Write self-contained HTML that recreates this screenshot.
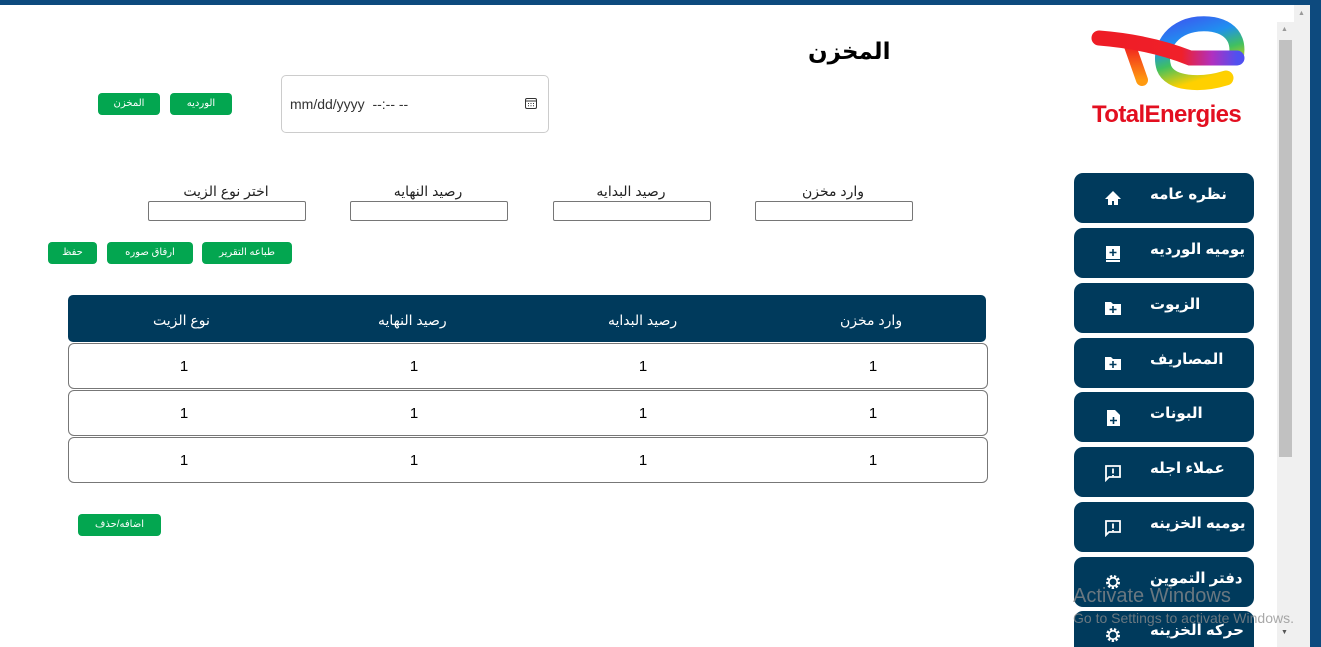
<!DOCTYPE html>
<html><head><meta charset="utf-8"><style>
html,body{margin:0;width:1321px;height:647px;overflow:hidden;background:#fff;font-family:"Liberation Sans","DejaVu Sans",sans-serif;position:relative}
.a{position:absolute}
.g{position:absolute;background:#03a650;color:#fff;border-radius:4px;font-size:10px;text-align:center;line-height:22px;height:22px}
.in{position:absolute;border:1px solid #767676;border-radius:2px;height:18px;width:156px;background:#fff}
.lb{position:absolute;font-size:14px;text-align:center;width:156px;color:#222}
.nav{position:absolute;left:1074px;width:180px;height:50px;background:#003a5c;border-radius:9px;color:#fff;font-weight:bold;font-size:15px;overflow:hidden}
.nav span{position:absolute;left:76px;top:12px}
.nav svg{position:absolute;left:30px;top:17px}
.th{position:absolute;left:68px;top:295px;width:918px;height:47px;background:#003a5c;border-radius:5px;color:#fff;font-size:14px}
.row{position:absolute;left:68px;width:920px;height:46px;border:1px solid #777;border-radius:6px;box-sizing:border-box;font-size:15px}
.c{position:absolute;width:40px;text-align:center}
</style></head><body>
<div class="a" style="left:0;top:0;width:1321px;height:5px;background:#0d4a7e"></div>
<div class="a" style="left:1310px;top:0;width:11px;height:647px;background:#0d4a7e"></div>
<div class="a" style="left:1294px;top:5px;width:16px;height:642px;background:#f0f0f0"></div>
<div class="a" style="left:1277px;top:22px;width:17px;height:625px;background:#f0f0f0"></div>
<div class="a" style="left:1279px;top:40px;width:13px;height:417px;background:#c1c1c1"></div>
<div class="a" style="left:1281px;top:26px;font-size:7px;color:#999">▲</div>
<div class="a" style="left:1298px;top:10px;font-size:7px;color:#999">▲</div>
<div class="a" style="left:1281px;top:629px;font-size:7px;color:#555">▼</div>

<svg class="a" style="left:1090px;top:16px" width="160" height="84" viewBox="0 0 160 84">
<defs><linearGradient id="r" x1="0" x2="1"><stop offset="0" stop-color="#ee1c25"/><stop offset=".6" stop-color="#f0202a"/><stop offset=".82" stop-color="#b030c0"/><stop offset="1" stop-color="#5050f0"/></linearGradient>
<linearGradient id="e" x1="0" y1="0" x2="0.4" y2="1"><stop offset="0" stop-color="#3a5cf0"/><stop offset=".35" stop-color="#2090f0"/><stop offset=".65" stop-color="#40c060"/><stop offset="1" stop-color="#ffd000"/></linearGradient>
<linearGradient id="t" x1="0" y1="0" x2="0" y2="1"><stop offset="0" stop-color="#f02020"/><stop offset="1" stop-color="#ff9a10"/></linearGradient></defs>
<path d="M146 42 C152 14 128 6 108 8 C80 11 68 34 74 52 C80 68 110 70 136 62" stroke="url(#e)" stroke-width="15" fill="none" stroke-linecap="round"/>
<path d="M40 30 L52 64" stroke="url(#t)" stroke-width="12" stroke-linecap="round"/>
<path d="M9 22 Q60 26 100 42 L147 42" stroke="url(#r)" stroke-width="15" fill="none" stroke-linecap="round"/>
</svg>
<div class="a" style="left:1092px;top:101px;color:#e30f20;font-weight:bold;font-size:24px;letter-spacing:-0.6px">TotalEnergies</div>

<div class="a" style="left:808px;top:38px;font-size:23px;font-weight:bold">المخزن</div>

<div class="g" style="left:98px;top:93px;width:62px">المخزن</div>
<div class="g" style="left:170px;top:93px;width:62px">الورديه</div>
<div class="a" style="left:281px;top:75px;width:266px;height:56px;border:1px solid #ccc;border-radius:5px"></div>
<div class="a" style="left:290px;top:96px;font-size:14px;color:#333">mm/dd/yyyy&nbsp; --:-- --</div>
<svg class="a" style="left:525px;top:97px" width="12" height="12" viewBox="0 0 12 12"><rect x="0.5" y="1.5" width="11" height="10" rx="1.5" fill="none" stroke="#333"/><path d="M1 4h10" stroke="#333"/><path d="M3 6.5h1M5.5 6.5h1M8 6.5h1M3 8.7h1M5.5 8.7h1M8 8.7h1" stroke="#333"/></svg>

<div class="lb" style="left:755px;top:183px">وارد مخزن</div>
<div class="lb" style="left:553px;top:183px">رصيد البدايه</div>
<div class="lb" style="left:350px;top:183px">رصيد النهايه</div>
<div class="lb" style="left:148px;top:183px">اختر نوع الزيت</div>
<div class="in" style="left:755px;top:201px"></div>
<div class="in" style="left:553px;top:201px"></div>
<div class="in" style="left:350px;top:201px"></div>
<div class="in" style="left:148px;top:201px"></div>

<div class="g" style="left:48px;top:242px;width:49px">حفظ</div>
<div class="g" style="left:107px;top:242px;width:86px">ارفاق صوره</div>
<div class="g" style="left:202px;top:242px;width:90px">طباعه التقرير</div>

<div class="th"><span class="a" style="left:772px;top:17px">وارد مخزن</span><span class="a" style="left:540px;top:17px">رصيد البدايه</span><span class="a" style="left:310px;top:17px">رصيد النهايه</span><span class="a" style="left:85px;top:17px">نوع الزيت</span></div>
<div class="row" style="top:343px"><span class="c" style="left:784px;top:14px">1</span><span class="c" style="left:554px;top:14px">1</span><span class="c" style="left:325px;top:14px">1</span><span class="c" style="left:95px;top:14px">1</span></div>
<div class="row" style="top:390px"><span class="c" style="left:784px;top:14px">1</span><span class="c" style="left:554px;top:14px">1</span><span class="c" style="left:325px;top:14px">1</span><span class="c" style="left:95px;top:14px">1</span></div>
<div class="row" style="top:437px"><span class="c" style="left:784px;top:14px">1</span><span class="c" style="left:554px;top:14px">1</span><span class="c" style="left:325px;top:14px">1</span><span class="c" style="left:95px;top:14px">1</span></div>
<div class="g" style="left:78px;top:514px;width:83px">اضافه/حذف</div>

<div class="nav" style="top:173px"><svg width="18" height="16" viewBox="0 0 18 16"><path d="M9 1 L1 9 H4 V15 H8 V11 H10 V15 H14 V9 H17 Z" fill="#fff"/></svg><span>نظره عامه</span></div>
<div class="nav" style="top:228px"><svg width="18" height="18" viewBox="0 0 18 18"><rect x="2" y="1" width="14" height="13" fill="#fff"/><rect x="2" y="15" width="14" height="2" fill="#fff"/><path d="M9 4v7M5.5 7.5h7" stroke="#003a5c" stroke-width="1.6"/></svg><span>يوميه الورديه</span></div>
<div class="nav" style="top:283px"><svg width="18" height="16" viewBox="0 0 18 16"><path d="M1 2h6l2 2h8v11H1z" fill="#fff"/><path d="M9 6v7M5.5 9.5h7" stroke="#003a5c" stroke-width="1.6"/></svg><span>الزيوت</span></div>
<div class="nav" style="top:338px"><svg width="18" height="16" viewBox="0 0 18 16"><path d="M1 2h6l2 2h8v11H1z" fill="#fff"/><path d="M9 6v7M5.5 9.5h7" stroke="#003a5c" stroke-width="1.6"/></svg><span>المصاريف</span></div>
<div class="nav" style="top:392px"><svg width="18" height="18" viewBox="0 0 18 18"><path d="M3 1h8l5 5v11H3z" fill="#fff"/><path d="M9.5 8v7M6 11.5h7" stroke="#003a5c" stroke-width="1.6"/></svg><span>البونات</span></div>
<div class="nav" style="top:447px"><svg width="18" height="18" viewBox="0 0 18 18"><path d="M2 2h14v11H5l-3 3z" fill="none" stroke="#fff" stroke-width="1.8"/><path d="M9 4.5v5M9 11v1.3" stroke="#fff" stroke-width="1.8"/></svg><span>عملاء اجله</span></div>
<div class="nav" style="top:502px"><svg width="18" height="18" viewBox="0 0 18 18"><path d="M2 2h14v11H5l-3 3z" fill="none" stroke="#fff" stroke-width="1.8"/><path d="M9 4.5v5M9 11v1.3" stroke="#fff" stroke-width="1.8"/></svg><span>يوميه الخزينه</span></div>
<div class="nav" style="top:557px"><svg width="18" height="18" viewBox="0 0 18 18" style="top:16px"><circle cx="9" cy="9" r="5.5" fill="none" stroke="#fff" stroke-width="3" stroke-dasharray="2.2 1.6"/><circle cx="9" cy="9" r="4.2" fill="none" stroke="#fff" stroke-width="1.6"/></svg><span style="top:12px">دفتر التموين</span></div>
<div class="nav" style="top:611px;height:36px;border-radius:9px 9px 0 0"><svg width="18" height="18" viewBox="0 0 18 18" style="top:15px"><circle cx="9" cy="9" r="5.5" fill="none" stroke="#fff" stroke-width="3" stroke-dasharray="2.2 1.6"/><circle cx="9" cy="9" r="4.2" fill="none" stroke="#fff" stroke-width="1.6"/></svg><span style="top:10px">حركه الخزينه</span></div>

<div class="a" style="left:1073px;top:585px;font-size:20px;color:rgba(140,140,140,.75)">Activate Windows</div>
<div class="a" style="left:1073px;top:610px;font-size:14px;color:rgba(140,140,140,.75)">Go to Settings to activate Windows.</div>
</body></html>
